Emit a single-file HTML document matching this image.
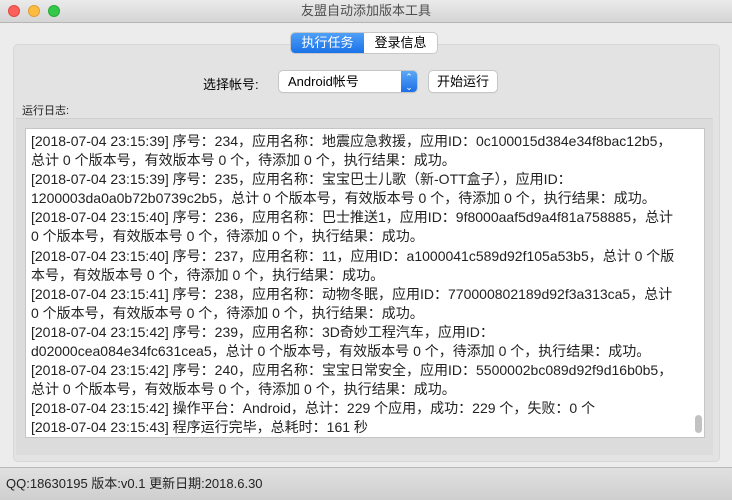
<!DOCTYPE html>
<html><head><meta charset="utf-8"><style>
body{margin:0;width:732px;height:500px;overflow:hidden;background:#ececec;font-family:"Liberation Sans","Noto Sans CJK SC",sans-serif;position:relative}
.title{position:absolute;left:0;top:0;width:732px;height:22px;background:linear-gradient(#ebebeb,#d5d5d5);border-bottom:1px solid #b5b5b5;text-align:center;font-size:13px;line-height:22px;color:#4d4d4d}
.dot{position:absolute;top:5px;width:12px;height:12px;border-radius:50%}
.group{position:absolute;left:13px;top:44px;width:705px;height:416px;background:#e3e3e3;border:1px solid #d8d8d8;border-radius:5px}
.tabs{position:absolute;left:291px;top:33px;height:20px;display:flex;font-size:13px;border-radius:4px;box-shadow:0 0 0 1px #c8c8c8;background:#fff;overflow:hidden}
.tabs div{padding:0 10.5px;line-height:20px}
.sel{background:linear-gradient(#4fa0f7,#1a72e8);color:#fff}
.combo{position:absolute;left:279px;top:71px;width:138px;height:21px;background:#fff;border-radius:4px;box-shadow:0 0 0 1px #c6c6c6,0 1px 1px #bbb;font-size:13px;line-height:21px}
.combo span{padding-left:9px}
.arr{position:absolute;right:0;top:0;width:16px;height:21px;background:linear-gradient(#5aa8f8,#1c6fe6);border-radius:0 4px 4px 0;color:#fff;font-size:9px;text-align:center;line-height:10px;padding-top:1px;box-sizing:border-box}
.btn{position:absolute;left:429px;top:71px;width:68px;height:21px;background:#fff;border-radius:4px;box-shadow:0 0 0 1px #c6c6c6,0 1px 1px #bbb;font-size:13px;line-height:21px;text-align:center}
.inner{position:absolute;left:16px;top:118px;width:697px;height:336px;background:#dcdcdc;border-top:1px solid #d0d0d0}
.ta{position:absolute;left:25px;top:128px;width:680px;height:310px;background:#fff;border:1px solid #c5c5c5;box-sizing:border-box;overflow:hidden}
.txt{position:absolute;left:5px;top:3px;width:660px;font-size:14px;line-height:19.1px;color:#222;white-space:nowrap}
.sb{position:absolute;right:2px;top:286px;width:7px;height:18px;background:#c2c2c2;border-radius:4px}
.status{position:absolute;left:0;top:467px;width:732px;height:33px;border-top:1px solid #b8b8b8;background:linear-gradient(#e0e0e0,#cfcfcf);font-size:13px;line-height:32px;padding-left:6px;box-sizing:border-box;color:#222}
</style></head><body>
<div class="title">友盟自动添加版本工具</div>
<div class="dot" style="left:8px;background:#fc605b;border:1px solid #de4a43;box-sizing:border-box"></div>
<div class="dot" style="left:28px;background:#fdbc40;border:1px solid #de9f34;box-sizing:border-box"></div>
<div class="dot" style="left:48px;background:#34c84a;border:1px solid #27aa35;box-sizing:border-box"></div>
<div class="group"></div>
<div class="tabs"><div class="sel">执行任务</div><div>登录信息</div></div>
<div style="position:absolute;left:203px;top:74px;font-size:13px">选择帐号:</div>
<div class="combo"><span>Android帐号</span><div class="arr">⌃<br>⌄</div></div>
<div class="btn">开始运行</div>
<div style="position:absolute;left:22px;top:102px;font-size:11px;color:#222">运行日志:</div>
<div class="inner"></div>
<div class="ta"><div class="txt">
[2018-07-04 23:15:39] 序号：234，应用名称：地震应急救援，应用ID：0c100015d384e34f8bac12b5，<br>
总计 0 个版本号，有效版本号 0 个，待添加 0 个，执行结果：成功。<br>
[2018-07-04 23:15:39] 序号：235，应用名称：宝宝巴士儿歌（新-OTT盒子），应用ID：<br>
1200003da0a0b72b0739c2b5，总计 0 个版本号，有效版本号 0 个，待添加 0 个，执行结果：成功。<br>
[2018-07-04 23:15:40] 序号：236，应用名称：巴士推送1，应用ID：9f8000aaf5d9a4f81a758885，总计<br>
0 个版本号，有效版本号 0 个，待添加 0 个，执行结果：成功。<br>
[2018-07-04 23:15:40] 序号：237，应用名称：11，应用ID：a1000041c589d92f105a53b5，总计 0 个版<br>
本号，有效版本号 0 个，待添加 0 个，执行结果：成功。<br>
[2018-07-04 23:15:41] 序号：238，应用名称：动物冬眠，应用ID：770000802189d92f3a313ca5，总计<br>
0 个版本号，有效版本号 0 个，待添加 0 个，执行结果：成功。<br>
[2018-07-04 23:15:42] 序号：239，应用名称：3D奇妙工程汽车，应用ID：<br>
d02000cea084e34fc631cea5，总计 0 个版本号，有效版本号 0 个，待添加 0 个，执行结果：成功。<br>
[2018-07-04 23:15:42] 序号：240，应用名称：宝宝日常安全，应用ID：5500002bc089d92f9d16b0b5，<br>
总计 0 个版本号，有效版本号 0 个，待添加 0 个，执行结果：成功。<br>
[2018-07-04 23:15:42] 操作平台：Android，总计：229 个应用，成功：229 个，失败：0 个<br>
[2018-07-04 23:15:43] 程序运行完毕，总耗时：161 秒
</div><div class="sb"></div></div>
<div class="status">QQ:18630195 版本:v0.1 更新日期:2018.6.30</div>
</body></html>
